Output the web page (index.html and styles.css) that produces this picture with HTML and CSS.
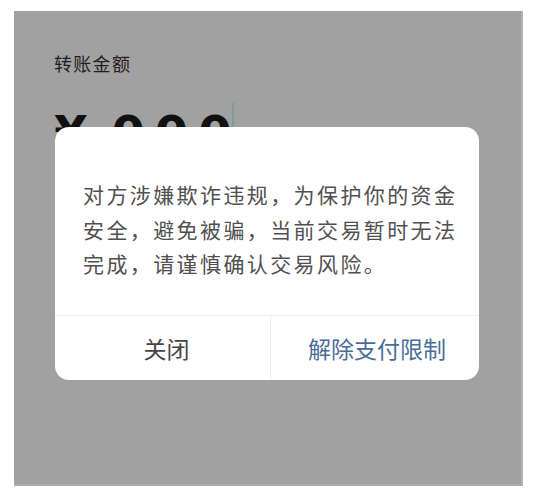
FILE: index.html
```
<!DOCTYPE html>
<html lang="zh-CN">
<head>
<meta charset="utf-8">
<link rel="stylesheet" href="styles.css">
</head>
<body>
<div class="screen">
  <div class="label">转账金额</div>
  <div class="amount-row">
    <span class="amount"><span class="yen">¥</span><span class="digits">000</span></span><span class="cursor"></span>
  </div>
  <div class="dialog">
    <div class="message">对方涉嫌欺诈违规，为保护你的资金<br>安全，避免被骗，当前交易暂时无法<br>完成，请谨慎确认交易风险。</div>
    <div class="actions">
      <div class="btn btn-close">关闭</div>
      <div class="btn btn-primary">解除支付限制</div>
    </div>
  </div>
</div>
</body>
</html>
```
FILE: styles.css
```
html, body {
  margin: 0;
  padding: 0;
  background: #ffffff;
}
body {
  font-family: "Noto Sans CJK SC", "Noto Sans", sans-serif;
}
.screen {
  position: relative;
  margin: 11px 15px 0 14px;
  width: 509px;
  height: 475px;
  box-sizing: border-box;
  background: #a2a1a2;
  border-right: 2px solid #b3b2b3;
  border-bottom: 2px solid #aeadae;
  padding: 40px 0 0 40px;
  overflow: hidden;
}
.label {
  font-size: 18px;
  line-height: 24px;
  letter-spacing: 1.3px;
  color: #1e1e1e;
}
.amount-row {
  display: flex;
  align-items: flex-start;
  margin-top: 15px;
  height: 70px;
}
.amount {
  font-family: "DejaVu Sans", "Liberation Sans", sans-serif;
  font-weight: bold;
  font-size: 48px;
  line-height: 1;
  margin-top: 19px;
  color: #111111;
}
.yen {
  margin-right: 24px;
}
.digits {
  letter-spacing: 10px;
  margin-right: -10px;
}
.cursor {
  width: 2px;
  height: 34px;
  margin-top: 13px;
  background: #7f9d8d;
}
.dialog {
  position: absolute;
  left: 41px;
  top: 116px;
  width: 424px;
  height: 253px;
  background: #ffffff;
  border-radius: 14px;
  display: flex;
  flex-direction: column;
  overflow: hidden;
}
.message {
  flex: 1;
  padding: 50px 16px 0 28px;
  font-size: 21px;
  line-height: 34.5px;
  letter-spacing: 2.4px;
  color: #505050;
  white-space: nowrap;
}
.actions {
  display: flex;
  height: 64px;
  border-top: 1px solid #efefef;
}
.btn {
  display: flex;
  align-items: center;
  justify-content: center;
  font-size: 23px;
}
.btn-close {
  width: 216px;
  box-sizing: border-box;
  padding-left: 8px;
  color: #444444;
  border-right: 1px solid #efefef;
}
.btn-primary {
  flex: 1;
  color: #4a6d98;
  padding-left: 4px;
}
```
